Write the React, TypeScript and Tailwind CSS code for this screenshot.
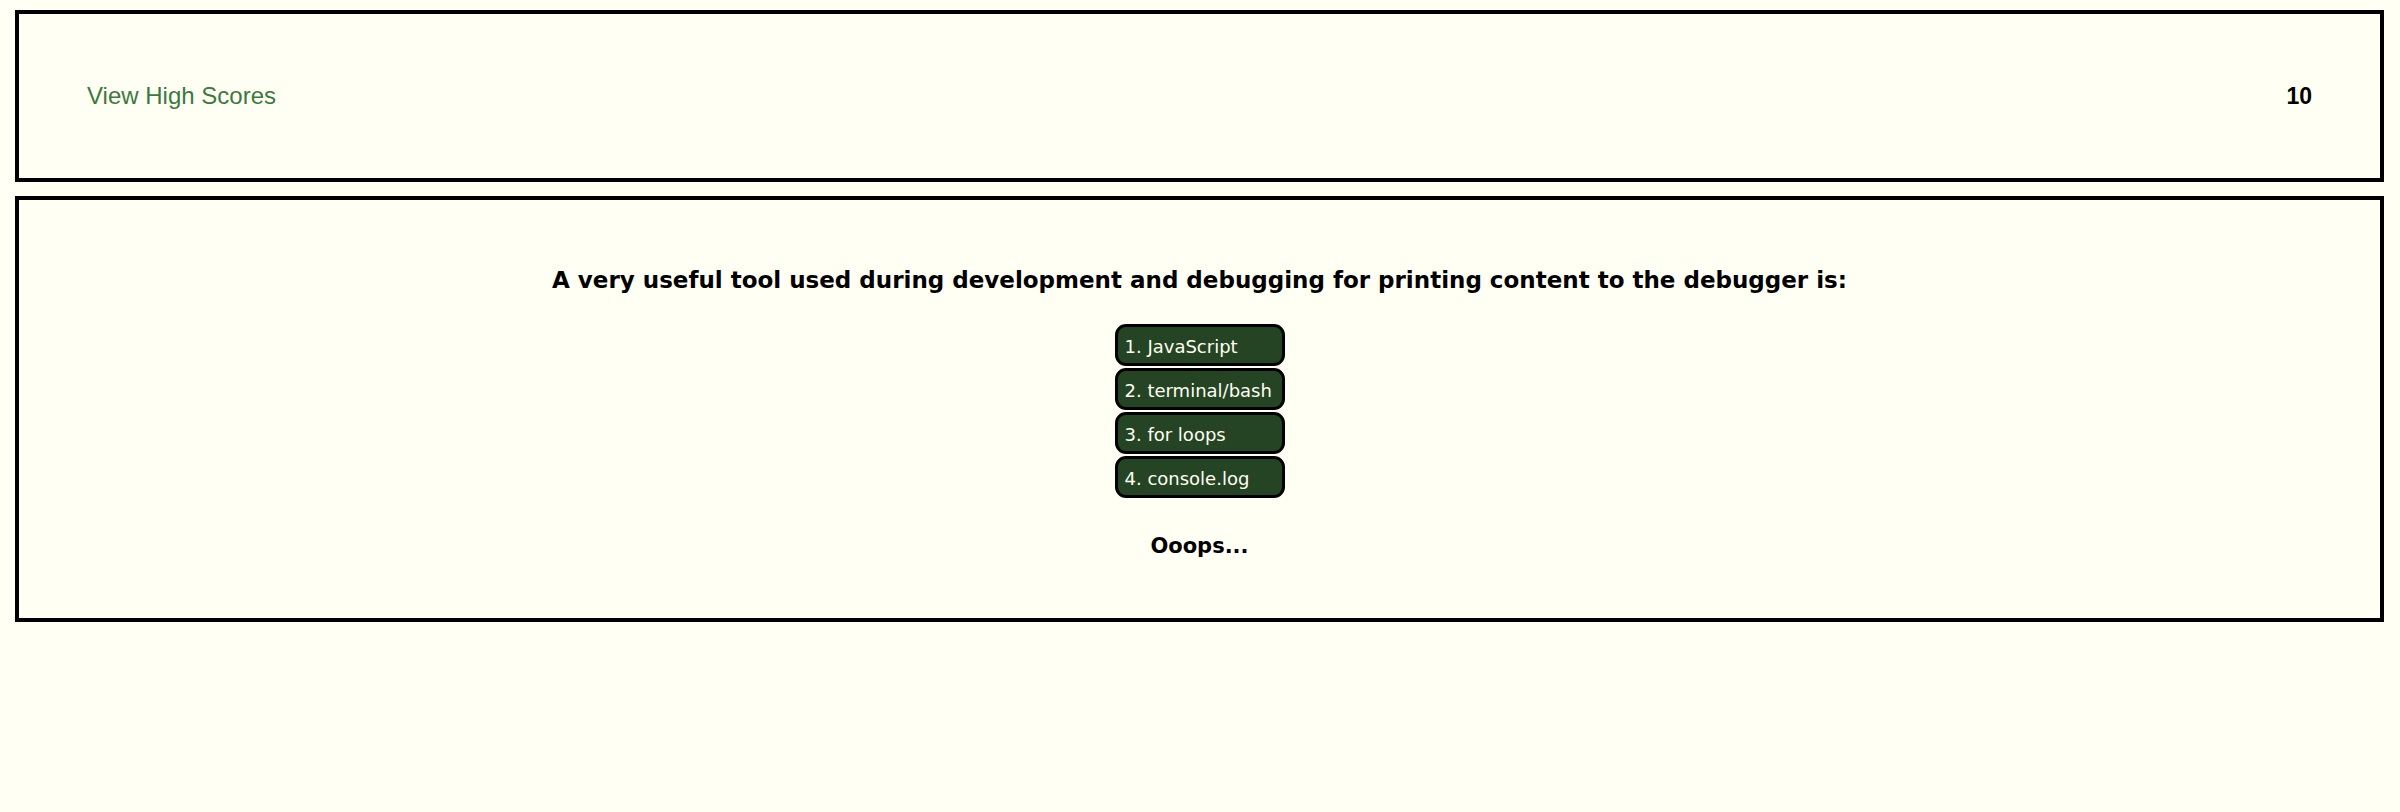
import React from 'react';

const choices = ['1. JavaScript', '2. terminal/bash', '3. for loops', '4. console.log'];

const App: React.FC = () => {
  return (
    <div className="min-h-screen w-full bg-[#fffff3] pt-[10px] font-['DejaVu_Sans','Open_Sans',sans-serif]">
      {/* Header bar */}
      <header className="ml-[15px] mr-[16px] h-[172px] border-4 border-black flex items-center justify-between px-[68px]">
        <a className="text-[24px] text-[#3b7a3f] font-['Liberation_Sans',Arial,sans-serif] cursor-pointer">
          View High Scores
        </a>
        <span className="text-[23px] font-bold text-black font-['Liberation_Sans',Arial,sans-serif]">10</span>
      </header>

      {/* Quiz card */}
      <main className="ml-[15px] mr-[16px] mt-[14px] h-[426px] border-4 border-black flex flex-col items-center pt-[62px]">
        <h2 className="text-[23px] leading-[36px] font-bold text-black">
          A very useful tool used during development and debugging for printing content to the debugger is:
        </h2>
        <div className="mt-[26px] flex flex-col gap-[2px]">
          {choices.map((c) => (
            <button
              key={c}
              className="w-[170px] h-[42px] rounded-[11px] border-[3px] border-black bg-[#244424] text-[#fffff3] text-[18px] leading-[20px] text-left pl-[7px] pt-[3px] whitespace-nowrap"
            >
              {c}
            </button>
          ))}
        </div>
        <p className="mt-[33px] text-[21px] font-bold text-black">Ooops...</p>
      </main>
    </div>
  );
};

export default App;
